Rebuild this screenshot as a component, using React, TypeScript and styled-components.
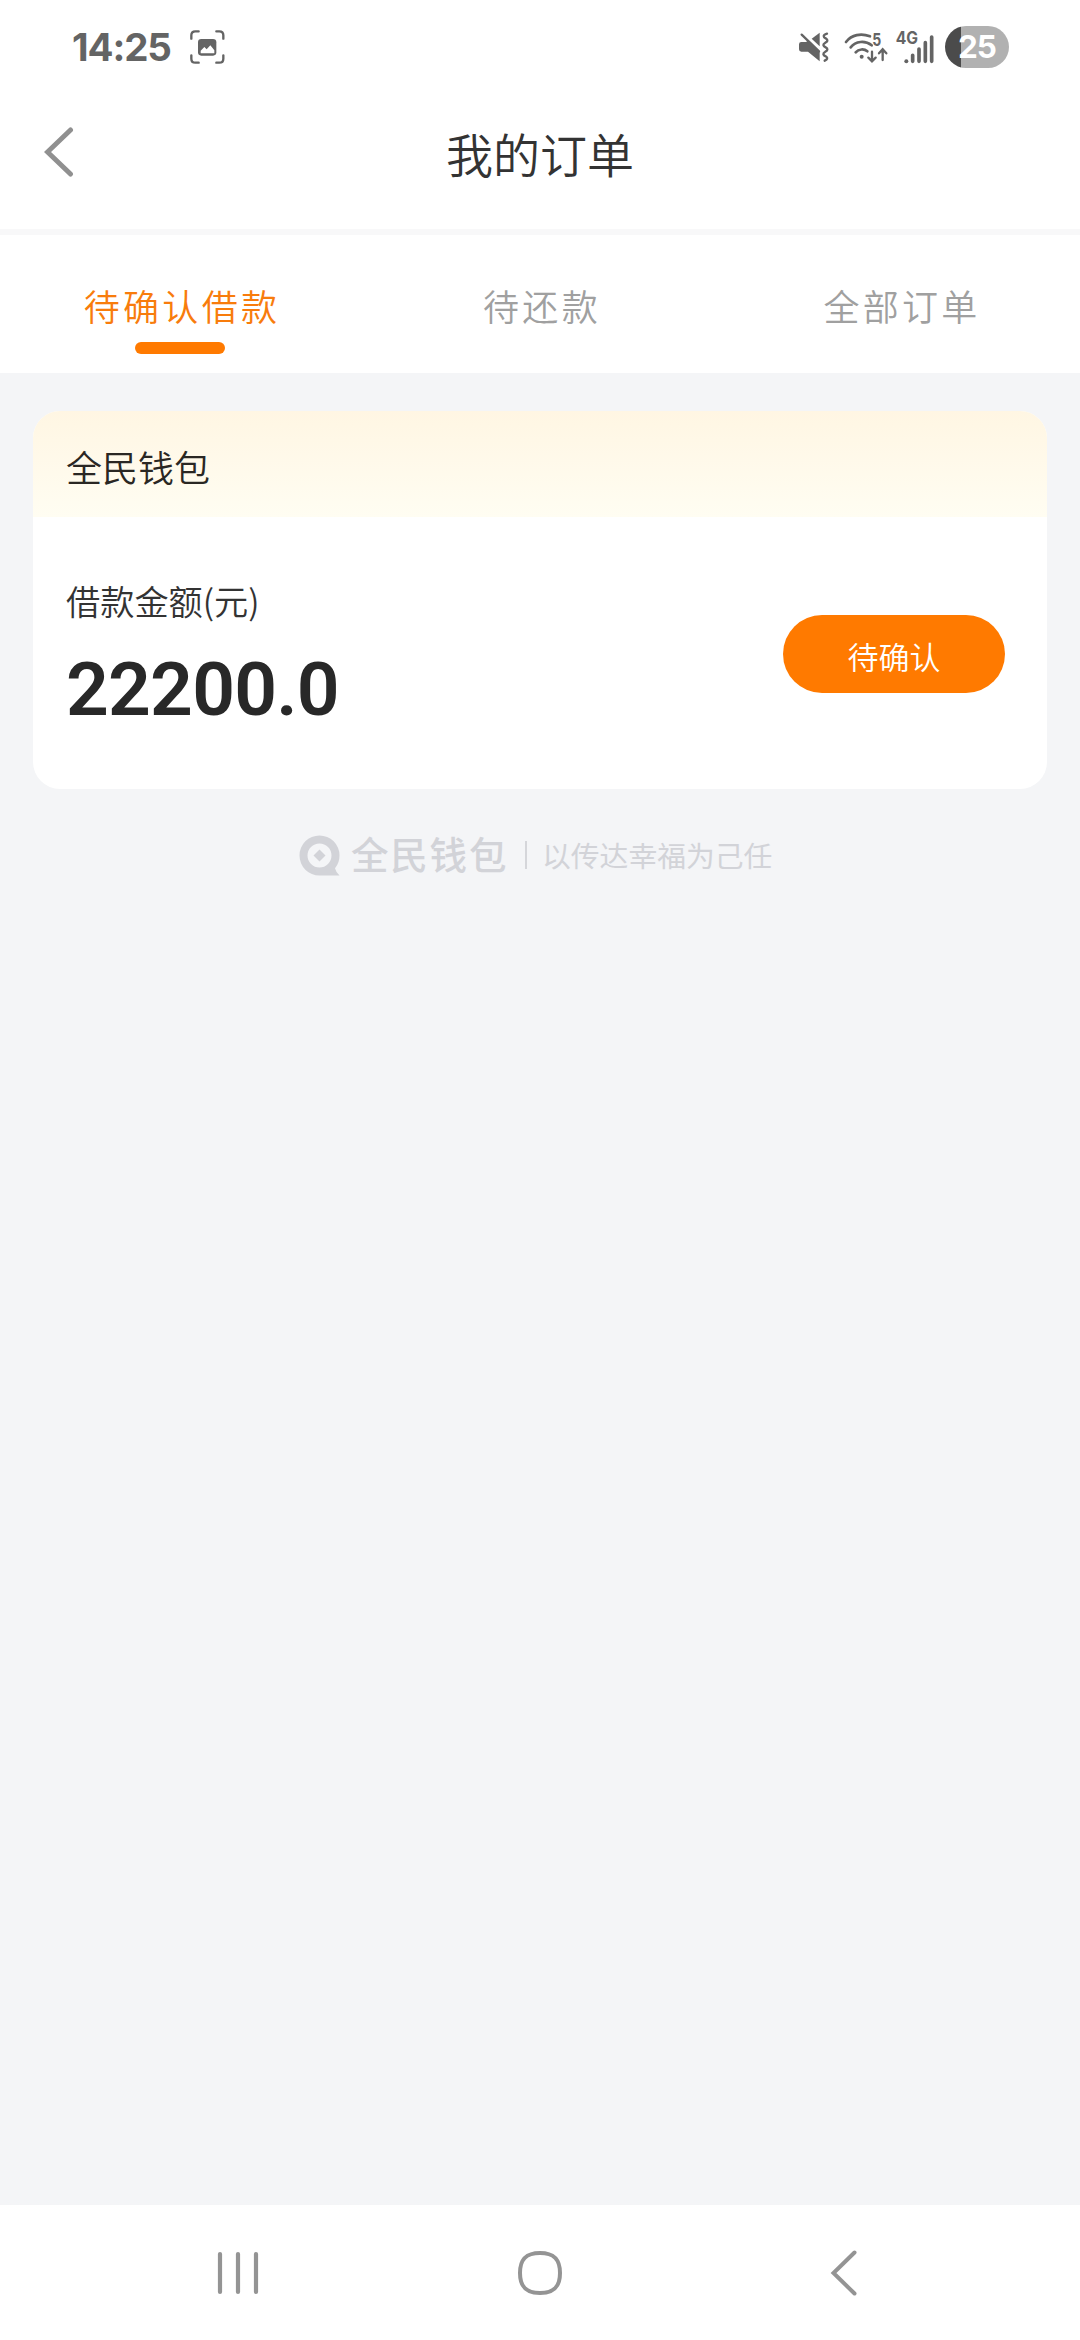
import React from "react";
import styled, { createGlobalStyle } from "styled-components";

const cjk = `"Noto Sans CJK SC", "Noto Sans", sans-serif`;

const GlobalStyle = createGlobalStyle`
  * { box-sizing: border-box; }
  body { margin: 0; background: #f4f5f7; font-family: ${cjk}; font-weight: 350; }
`;

const Screen = styled.div`
  display: flex;
  flex-direction: column;
  width: 1080px;
  height: 2340px;
  background: #f4f5f7;
  overflow: hidden;
`;

const StatusBar = styled.div`
  display: flex;
  justify-content: space-between;
  align-items: center;
  height: 94px;
  padding: 0 71px 0 72px;
  background: #fff;
`;

const StatusGroup = styled.div`
  display: flex;
  align-items: center;
`;

const Clock = styled.span`
  width: 117px;
  font: 700 38.5px/94px Inter, sans-serif;
  letter-spacing: -1.1px;
  color: #646464;
`;

const Glyph = styled.svg<{ $w: number; $h: number; $ml?: number }>`
  display: block;
  flex: none;
  width: ${(p) => p.$w}px;
  height: ${(p) => p.$h}px;
  margin-left: ${(p) => p.$ml ?? 0}px;
`;

const Battery = styled.div`
  display: flex;
  align-items: center;
  justify-content: center;
  width: 64px;
  height: 42px;
  margin-left: 10px;
  border-radius: 21px;
  background: linear-gradient(90deg, #4b4b4b 16px, #b1b1b1 16px);
  color: #fff;
  font: 700 31.5px/42px Inter, sans-serif;
  letter-spacing: -1px;
`;

const NavHeader = styled.header`
  display: grid;
  grid-template-columns: 120px 1fr 120px;
  height: 135px;
  background: #fff;
`;

const BackButton = styled.div`
  padding: 33px 0 0 44px;
`;

const Title = styled.h1`
  margin: 0;
  padding-top: 20px;
  font: 350 47px/78px ${cjk};
  text-align: center;
  color: #333;
`;

const TabBar = styled.nav`
  display: grid;
  grid-template-columns: repeat(3, 1fr);
  height: 144px;
  border-top: 6px solid #f8f8f9;
  background: #fff;
`;

const Tab = styled.div<{ $active?: boolean }>`
  display: flex;
  flex-direction: column;
  align-items: center;
  padding-top: 45px;
  font-size: 36px;
  line-height: 50px;
  letter-spacing: 3.3px;
  color: ${(p) => (p.$active ? "#f87c0c" : "#a0a0a0")};
`;

const TabLabel = styled.span`
  padding-left: 4px;
`;

const TabIndicator = styled.span`
  width: 90px;
  height: 12px;
  margin-top: 12px;
  border-radius: 6px;
  background: #ff7a00;
`;

const Content = styled.main`
  flex: 1;
  padding: 38px 33px 0;
`;

const Card = styled.section`
  height: 378px;
  border-radius: 27px;
  background: #fff;
  overflow: hidden;
`;

const CardHeader = styled.div`
  height: 106px;
  padding: 29px 33px 0;
  background: linear-gradient(180deg, #fff6e3, #fffdf2);
  font-size: 36px;
  line-height: 52px;
  color: #2a2723;
`;

const CardBody = styled.div`
  display: flex;
  justify-content: space-between;
  padding: 59px 42px 0 33px;
`;

const AmountLabel = styled.div`
  font-size: 34.2px;
  line-height: 48px;
  color: #333;
`;

const Amount = styled.div`
  margin-top: 20px;
  font: 600 75px/90px Roboto, sans-serif;
  letter-spacing: -0.8px;
  color: #282828;
`;

const ConfirmButton = styled.button`
  width: 222px;
  height: 78px;
  margin: 39px 0 0;
  padding: 3px 0 0;
  border: 0;
  border-radius: 39px;
  background: #ff7a00;
  color: #fff;
  font: 350 31px/72px ${cjk};
`;

const BrandFooter = styled.footer`
  display: flex;
  align-items: center;
  height: 46px;
  margin-top: 43px;
  padding-left: 266px;
  color: #d2d3d8;
`;

const BrandName = styled.span`
  width: 174px;
  padding-left: 11px;
  font: 500 37.5px/42px ${cjk};
  height: 46px;
  letter-spacing: 1.8px;
  white-space: nowrap;
`;

const Divider = styled.span`
  width: 2px;
  height: 28px;
  margin-left: 11px;
  background: #d5d6da;
`;

const Slogan = styled.span`
  padding-left: 15px;
  font-size: 28.8px;
  font-weight: 400;
  line-height: 46px;
  white-space: nowrap;
`;

const SystemNav = styled.div`
  display: grid;
  grid-template-columns: repeat(3, 303px);
  justify-content: center;
  justify-items: center;
  align-items: center;
  height: 135px;
  background: #fff;
`;

const ink = "#646464";

const CaptureIcon = () => (
  <Glyph $w={36} $h={36} viewBox="447 57 108 108" fill="none">
    <path
      d="M454 86V76q0-12 12-12H476M529 64H538q12 0 12 12V86M550 136V146q0 12-12 12H529M476 158H466q-12 0-12-12V136"
      stroke={ink}
      strokeWidth="7"
      strokeLinecap="round"
    />
    <rect x="474" y="87" width="55" height="50" rx="10" fill={ink} />
    <path d="M482 130V122L493 111L500 118L511 106L523 121V130Z" fill="#fff" />
  </Glyph>
);

const MuteIcon = () => (
  <Glyph $w={32} $h={32} viewBox="54 62 96 96" fill="none">
    <path d="M57 102q0-7 7-7H78L84 91L119 124V153L84 124H64q-7 0-7-7Z" fill={ink} />
    <path d="M95 85L119 67V108Z" fill={ink} />
    <path d="M65 73L117 123" stroke={ink} strokeWidth="7" strokeLinecap="round" />
    <path
      d="M141 70C127 74 130 81 137 84C145 89 143 94 136 97C127 102 129 107 137 111C145 115 143 121 136 124C127 129 129 135 137 138C145 143 142 147 134 151"
      stroke={ink}
      strokeWidth="7"
      strokeLinecap="round"
    />
  </Glyph>
);

const WifiIcon = () => (
  <Glyph $w={44} $h={34} $ml={14} viewBox="192 60 132 102" fill="none">
    <g stroke={ink} strokeWidth="8" strokeLinecap="round">
      <path d="M198 96C215 74 243 69 270 79" />
      <path d="M212 112C227 93 255 90 275 106" />
      <path d="M227 127C236 116 253 116 262 124" />
      <path d="M276 125V152M265 143L276 154L287 143M308 150V120M297 130L308 118L319 130" strokeWidth="7" />
    </g>
    <circle cx="245" cy="140" r="6" fill={ink} />
    <text x="277" y="108" fontFamily="Inter, sans-serif" fontWeight="700" fontSize="54" textLength="27" lengthAdjust="spacingAndGlyphs" fill={ink}>
      5
    </text>
  </Glyph>
);

const SignalIcon = () => (
  <Glyph $w={40} $h={36} $ml={7} viewBox="345 56 120 108" fill="none">
    <text
      x="347"
      y="101"
      fontFamily="Inter, sans-serif"
      fontWeight="700"
      fontSize="50"
      textLength="67"
      lengthAdjust="spacingAndGlyphs"
      fill={ink}
    >
      4G
    </text>
    <circle cx="379" cy="153" r="6" fill={ink} />
    <path
      d="M398 135V153M417 116V153M436 97V153M455 80V153"
      stroke={ink}
      strokeWidth="11"
      strokeLinecap="round"
    />
  </Glyph>
);

const TABS = ["待确认借款", "待还款", "全部订单"];

export default function App() {
  return (
    <Screen>
      <GlobalStyle />
      <StatusBar>
        <StatusGroup>
          <Clock>14:25</Clock>
          <CaptureIcon />
        </StatusGroup>
        <StatusGroup>
          <MuteIcon />
          <WifiIcon />
          <SignalIcon />
          <Battery>25</Battery>
        </StatusGroup>
      </StatusBar>

      <NavHeader>
        <BackButton>
          <Glyph $w={30} $h={50} viewBox="0 0 30 50" fill="none">
            <path d="M26.5 3L3.5 25L26.5 47" stroke="#909090" strokeWidth="5" strokeLinecap="round" />
          </Glyph>
        </BackButton>
        <Title>我的订单</Title>
      </NavHeader>

      <TabBar>
        {TABS.map((label, i) => (
          <Tab key={label} $active={i === 0}>
            <TabLabel>{label}</TabLabel>
            {i === 0 && <TabIndicator />}
          </Tab>
        ))}
      </TabBar>

      <Content>
        <Card>
          <CardHeader>全民钱包</CardHeader>
          <CardBody>
            <div>
              <AmountLabel>借款金额(元)</AmountLabel>
              <Amount>22200.0</Amount>
            </div>
            <ConfirmButton>待确认</ConfirmButton>
          </CardBody>
        </Card>
        <BrandFooter>
          <Glyph $w={41} $h={41} viewBox="0 0 41 41">
            <path
              fill="currentColor"
              fillRule="evenodd"
              d="M40.5 20.5A20 20 0 1 0 20.5 40.5H40.500Q37 37.500 36 33.200Q40.500 28 40.500 20.500ZM20.500 8.500A12 12 0 1 0 20.500 32.500A12 12 0 1 0 20.500 8.500Z"
            />
            <path fill="currentColor" d="M20.500 14.500L26.500 20.500L20.500 26.500L14.500 20.500Z" />
          </Glyph>
          <BrandName>全民钱包</BrandName>
          <Divider />
          <Slogan>以传达幸福为己任</Slogan>
        </BrandFooter>
      </Content>

      <SystemNav>
        <Glyph $w={44} $h={44} $ml={2} viewBox="0 0 44 44" fill="none">
          <path d="M4 3V41M22 3V41M40 3V41" stroke="#949494" strokeWidth="4.200" strokeLinecap="round" />
        </Glyph>
        <Glyph $w={46} $h={46} viewBox="0 0 46 46" fill="none">
          <path
            d="M23 3C37 3 43 9 43 23S37 43 23 43S3 37 3 23S9 3 23 3Z"
            stroke="#949494"
            strokeWidth="4"
          />
        </Glyph>
        <Glyph $w={28} $h={48} $ml={2} viewBox="0 0 28 48" fill="none">
          <path d="M24.500 3.500L3.500 24L24.500 44.500" stroke="#949494" strokeWidth="4" strokeLinecap="round" />
        </Glyph>
      </SystemNav>
    </Screen>
  );
}
